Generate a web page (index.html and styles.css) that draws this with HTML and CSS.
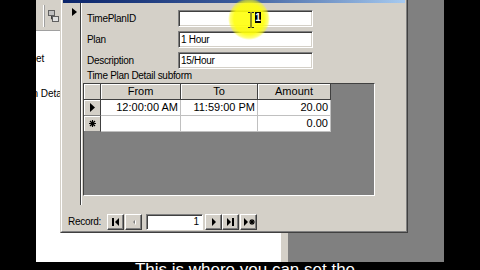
FILE: index.html
```html
<!DOCTYPE html>
<html>
<head>
<meta charset="utf-8">
<link rel="stylesheet" href="styles.css">
</head>
<body>
<div class="stage">
  <div class="screen">
    <div class="dbwin">
      <div class="dbmain">
        <div class="dbtool">
          <span class="sep"></span>
          <svg class="tbicon" width="11" height="12" viewBox="0 0 11 12">
            <rect x="0.5" y="0.5" width="6" height="5" fill="#c0c0c0" stroke="#606060"/>
            <rect x="4.5" y="6.5" width="6" height="5" fill="#e0e0e0" stroke="#606060"/>
            <path d="M3.5 6v3h1" stroke="#404040" fill="none"/>
          </svg>
        </div>
        <div class="dbitem item1">Timesheet</div>
        <div class="dbitem item2">Plan Detail</div>
      </div>
      <div class="dbedge"></div>
    </div>

    <div class="formwin">
      <div class="frame">
        <div class="titlebar"></div>
        <div class="client">
          <div class="main">
            <div class="recsel">
              <svg width="5" height="8" viewBox="0 0 5 8"><path d="M0 0L5 4L0 8Z" fill="#000"/></svg>
            </div>
            <div class="detail">
              <div class="field"><span class="lbl">TimePlanID</span><span class="tb"></span></div>
              <div class="field"><span class="lbl">Plan</span><span class="tb">1 Hour</span></div>
              <div class="field"><span class="lbl">Description</span><span class="tb">15/Hour</span></div>
              <div class="sublbl">Time Plan Detail subform</div>
              <div class="subform">
                <div class="ds">
                  <div class="hd"></div>
                  <div class="hd">From</div>
                  <div class="hd">To</div>
                  <div class="hd">Amount</div>

                  <div class="rs"><svg width="5" height="9" viewBox="0 0 5 9"><path d="M0 0L5 4.5L0 9Z" fill="#000"/></svg></div>
                  <div class="cell">12:00:00 AM</div>
                  <div class="cell">11:59:00 PM</div>
                  <div class="cell">20.00</div>

                  <div class="rs"><svg width="7" height="7" viewBox="0 0 7 7"><path d="M3.5 0V7M0 3.5H7M1 1L6 6M6 1L1 6" stroke="#000" stroke-width="1.2"/></svg></div>
                  <div class="cell"></div>
                  <div class="cell"></div>
                  <div class="cell">0.00</div>
                </div>
              </div>
            </div>
          </div>
          <div class="navbar">
            <span class="rec">Record:</span>
            <span class="nb"><svg width="15" height="14" viewBox="0 0 15 14"><rect x="4" y="3" width="2" height="8" fill="#000"/><path d="M11 3L7 7L11 11Z" fill="#000"/></svg></span>
            <span class="nb nb-gap1"><svg width="15" height="14" viewBox="0 0 15 14"><path d="M9 5L7 7L9 9Z" fill="#808080"/><path d="M9.5 5.5V9.5" stroke="#fff"/></svg></span>
            <span class="navtb">1</span>
            <span class="nb nb-gap2"><svg width="15" height="14" viewBox="0 0 15 14"><path d="M6 3L10 7L6 11Z" fill="#000"/></svg></span>
            <span class="nb"><svg width="15" height="14" viewBox="0 0 15 14"><path d="M4 3L8 7L4 11Z" fill="#000"/><rect x="9" y="3" width="2" height="8" fill="#000"/></svg></span>
            <span class="nb nb-gap1"><svg width="15" height="14" viewBox="0 0 15 14"><path d="M3 3L7 7L3 11Z" fill="#000"/><path d="M11 4V10M8 7H14M9 5L13 9M13 5L9 9" stroke="#000" stroke-width="1.1"/></svg></span>
          </div>
        </div>
      </div>
    </div>

    <div class="hl"></div>
    <svg class="ibeam" width="6" height="16" viewBox="0 0 6 16"><path d="M0 0.5H2.5M3.5 0.5H6M3 1V15M0 15.5H2.5M3.5 15.5H6" stroke="#202020" stroke-width="1"/></svg>
    <span class="sel1">1</span>
  </div>
  <div class="subtitle"><span>This is where you can set the</span></div>
</div>
</body>
</html>
```

FILE: styles.css
```css
* {
  box-sizing: border-box;
  margin: 0;
  padding: 0;
}

html, body {
  width: 480px;
  height: 270px;
  overflow: hidden;
  background: #000;
}

body {
  font-family: "Liberation Sans", Arial, sans-serif;
  color: #000;
}

.stage {
  width: 480px;
  height: 270px;
  display: flex;
  flex-direction: column;
  background: #000;
}

.screen {
  position: relative;
  width: 408px;
  height: 262px;
  margin-left: 36px;
  background: #808080;
  overflow: hidden;
  flex: none;
}

/* database window behind */
.dbwin {
  position: absolute;
  left: 0;
  top: 0;
  width: 252px;
  height: 262px;
  display: flex;
  background: #fff;
}

.dbmain {
  flex: 1;
  display: flex;
  flex-direction: column;
  overflow: hidden;
}

.dbtool {
  height: 31px;
  flex: none;
  background: #d4d0c8;
  border-bottom: 1px solid #a0a0a0;
  display: flex;
  align-items: flex-start;
  padding: 5px 0 0 7px;
}

.sep {
  width: 2px;
  height: 22px;
  border-left: 1px solid #fff;
  border-right: 1px solid #a0a0a0;
}

.tbicon {
  margin: 5px 0 0 3px;
}

.dbitem {
  font-size: 10px;
  line-height: 12px;
  white-space: nowrap;
}

.item1 {
  margin: 22px 0 0 -38px;
}

.item2 {
  margin: 23px 0 0 -18px;
}

.dbedge {
  width: 8px;
  background: #d4d0c8;
  border-left: 1px solid #fff;
}

/* form window */
.formwin {
  position: absolute;
  left: 24px;
  top: -15px;
  width: 348px;
  height: 248px;
  border: 1px solid;
  border-color: #d4d0c8 #404040 #404040 #d4d0c8;
  background: #d4d0c8;
}

.frame {
  height: 100%;
  border: 1px solid;
  border-color: #fff #808080 #808080 #fff;
  padding: 1px;
  display: flex;
  flex-direction: column;
}

.titlebar {
  height: 15px;
  flex: none;
  background: linear-gradient(to right, #0a246a, #3a5a9a 50%, #a6caf0);
}

.client {
  flex: 1;
  display: flex;
  flex-direction: column;
  background: #d4d0c8;
}

.main {
  height: 202px;
  flex: none;
  display: flex;
}

.recsel {
  width: 18px;
  flex: none;
  border-right: 1px solid #404040;
  padding: 5px 0 0 9px;
}

.recsel svg {
  display: block;
}

.detail {
  flex: 1;
  padding: 7px 0 0 5px;
  display: flex;
  flex-direction: column;
  border-left: 1px solid #fff;
}

.field {
  display: flex;
  align-items: center;
  height: 17px;
}

.field + .field {
  margin-top: 4px;
}

.lbl {
  width: 91px;
  font-size: 10px;
  letter-spacing: -0.3px;
  line-height: 12px;
  flex: none;
}

.tb {
  width: 135px;
  height: 17px;
  flex: none;
  background: #fff;
  border: 1px solid;
  border-color: #808080 #fff #fff #808080;
  box-shadow: inset 1px 1px 0 #404040, inset -1px -1px 0 #d4d0c8;
  font-size: 10px;
  letter-spacing: -0.3px;
  line-height: 15px;
  padding-left: 2px;
}

.sublbl {
  font-size: 10px;
  letter-spacing: -0.3px;
  line-height: 12px;
  margin-top: 1px;
  white-space: nowrap;
}

.subform {
  margin: 1px 0 0 -4px;
  width: 292px;
  height: 113px;
  background: #808080;
  border: 1px solid;
  border-color: #404040 #fff #fff #404040;
}

.ds {
  display: grid;
  grid-template-columns: 17px 80px 77px 73px;
  grid-auto-rows: 16px;
  width: 247px;
  font-size: 11px;
}

.hd {
  background: #d4d0c8;
  border-right: 1px solid #404040;
  border-bottom: 1px solid #404040;
  box-shadow: inset 1px 1px 0 #fff;
  text-align: center;
  line-height: 15px;
}

.rs {
  background: #d4d0c8;
  border-right: 1px solid #404040;
  border-bottom: 1px solid #808080;
  box-shadow: inset 1px 1px 0 #fff;
  display: flex;
  align-items: center;
  justify-content: center;
}

.cell {
  background: #fff;
  border-right: 1px solid #c0c0c0;
  border-bottom: 1px solid #c0c0c0;
  text-align: right;
  padding-right: 2px;
  line-height: 15px;
  white-space: nowrap;
}

/* navigation bar */
.navbar {
  flex: 1;
  display: flex;
  align-items: flex-start;
  padding: 9px 0 0 5px;
}

.rec {
  width: 39px;
  flex: none;
  font-size: 10px;
  letter-spacing: -0.3px;
  line-height: 16px;
}

.nb {
  width: 17px;
  height: 16px;
  flex: none;
  background: #d4d0c8;
  border: 1px solid;
  border-color: #fff #404040 #404040 #fff;
  box-shadow: inset -1px -1px 0 #808080;
}

.nb svg {
  display: block;
}

.nb-gap1 {
  margin-left: 1px;
}

.nb-gap2 {
  margin-left: 2px;
}

.navtb {
  width: 57px;
  height: 16px;
  flex: none;
  margin-left: 4px;
  background: #fff;
  border: 1px solid;
  border-color: #808080 #fff #fff #808080;
  box-shadow: inset 1px 1px 0 #404040;
  font-size: 10px;
  line-height: 14px;
  text-align: right;
  padding-right: 3px;
}

/* overlays */
.hl {
  position: absolute;
  left: 192px;
  top: -2px;
  width: 42px;
  height: 42px;
  border-radius: 50%;
  background: radial-gradient(circle closest-side, rgba(255, 255, 10, 0.9) 72%, rgba(255, 255, 10, 0.55) 90%, rgba(255, 255, 10, 0) 100%);
}

.ibeam {
  position: absolute;
  left: 212px;
  top: 12px;
}

.sel1 {
  position: absolute;
  left: 219px;
  top: 12px;
  width: 6px;
  height: 11px;
  background: #000;
  color: #fff;
  font-size: 10px;
  font-weight: bold;
  line-height: 11px;
  text-align: center;
}

.subtitle {
  height: 8px;
  flex: none;
  overflow: hidden;
  text-align: center;
  color: #fff;
  font-size: 17px;
  line-height: 17px;
  padding-left: 10px;
}

.subtitle span {
  display: block;
  margin-top: -1px;
}
```
